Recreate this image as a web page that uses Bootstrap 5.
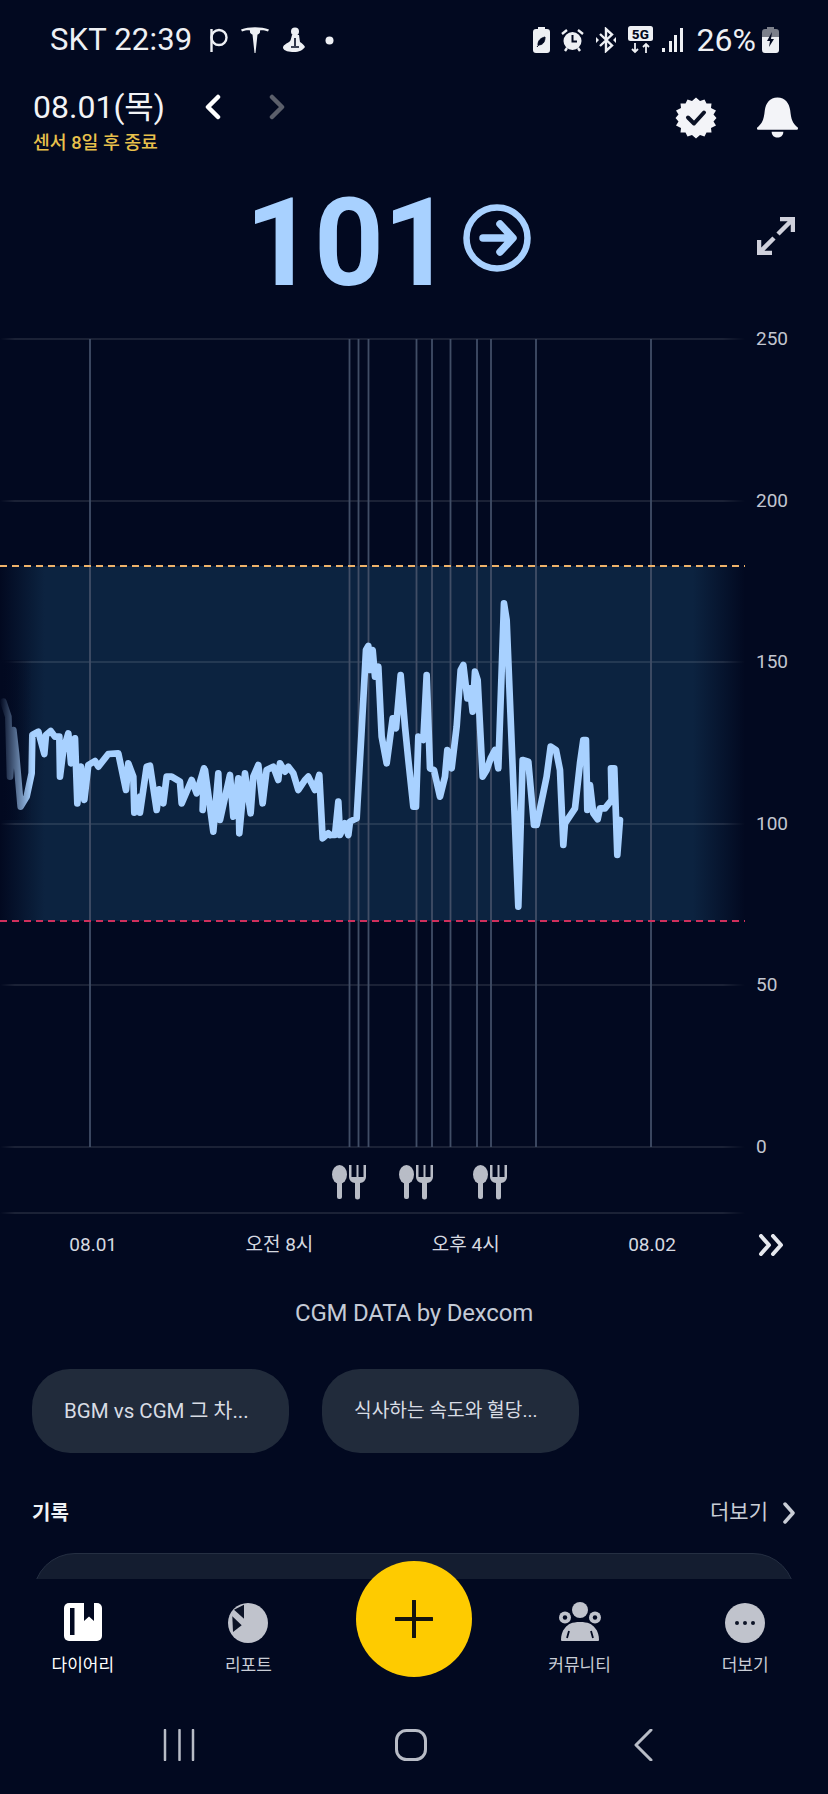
<!DOCTYPE html>
<html lang="ko">
<head>
<meta charset="utf-8">
<title>CGM</title>
<link href="https://cdn.jsdelivr.net/npm/bootstrap@5.3.0/dist/css/bootstrap.min.css" rel="stylesheet">
<style>
html,body{background:#020920;margin:0;}
body{font-family:Roboto,"Noto Sans CJK KR",sans-serif;color:#fff;}
.app-frame{width:828px;height:1794px;position:relative;overflow:hidden;background:#020920;}
.scroll-area{height:1579px;overflow:hidden;}
.status-row{height:80px;padding:0 49px 0 50px;font-size:31px;letter-spacing:.2px;color:#eef0f4;}
.status-time{margin-right:4px;}
.status-left{gap:13px;}
.status-right{gap:11px;}
.status-signal{margin-left:-2px;}
.status-pct{margin:0 -5px 0 2px;font-size:32px;letter-spacing:0;}
.status-dot{margin-left:7px;}
.head-row{height:85px;padding:10px 30px 0 33px;}
.date-text{font-size:32px;line-height:34px;color:#f2f3f6;width:166px;}
.sensor-text{font-size:18.3px;line-height:22px;color:#e9c14c;margin-top:8px;font-weight:500;}
.pager{height:34px;gap:44px;padding-left:4px;}
.head-icons{gap:40px;margin-top:7px;}
.value-row{height:157px;padding:0 33px 0 245px;}
.value-num{font-size:122px;line-height:1;font-weight:700;color:#a8d1ff;letter-spacing:-1px;margin-right:11px;}
.value-arrow{margin-bottom:12px;}
.value-expand{margin-bottom:16px;}
.chart-svg{display:block;}
.axis-lbl{font-family:Roboto,sans-serif;font-size:19px;fill:#c2c6d0;}
.axis-row{height:40px;position:relative;font-size:19px;color:#d6d9e0;}
.axis-cell{flex:0 0 186.3px;text-align:center;}
.axis-more{margin-right:44px;}
.credit{font-size:24px;line-height:32px;color:#c4cad6;margin-top:32px;letter-spacing:-.2px;}
.pill-row{gap:33px;padding:0 32px;margin-top:40px;}
.pill-item{width:257px;height:84px;border-radius:38px;background:#212b3b;color:#d8dce4;font-size:19.2px;padding-left:32px;}
.pill-latin{font-size:20.5px;}
.sec-row{padding:0 32px;margin-top:44px;height:32px;}
.sec-title{font-size:20px;font-weight:700;color:#f0f2f5;}
.sec-more{font-size:21px;color:#c9cdd6;gap:14px;}
.rec-card{margin:24px 33px 0;height:60px;background:#141d30;border:1px solid #252f42;border-radius:42px 42px 0 0;}
.tab-bar{height:108px;}
.tab-lbl{font-size:17px;line-height:20px;color:#c9cdd6;margin-top:11px;}
.tab-on{color:#fff;}
.tab-cell{padding-top:23px;}
.tab-ico{height:42px;}
.fab-btn{position:absolute;left:356px;top:1561px;width:116px;height:116px;border-radius:50%;background:#fecb00;}
.sys-bar{height:107px;padding-top:42px;}
</style>
</head>
<body>
<div class="app-frame d-flex flex-column">
<div class="scroll-area">
  <div class="status-row d-flex align-items-center justify-content-between">
    <div class="d-flex align-items-center status-left">
      <span class="status-time">SKT 22:39</span>
      <svg width="19" height="26" viewBox="0 0 19 26"><circle cx="10" cy="10.500" r="7.500" fill="none" stroke="#eef0f4" stroke-width="2.400"/><path d="M2.500 2V25" fill="none" stroke="#eef0f4" stroke-width="2.400"/></svg>
      <svg width="28" height="28" viewBox="0 0 28 28"><path d="M0 3.500C8 .5 20 .5 28 3.500L27 5.500C24 4.500 21 4 19 4.500L19 6.500C18 8 17 8.500 16.500 8.500L14.500 27h-1L11.500 8.500C11 8.500 10 8 9 6.500L9 4.500C7 4 4 4.500 1 5.500Z" fill="#eef0f4"/></svg>
      <svg width="23" height="26" viewBox="0 0 23 26"><circle cx="13" cy="4.500" r="4" fill="#eef0f4"/><path d="M10 8h7l1 7c2 1 4 3 5 5-2 3-6 5-11 5-5 0-10-1-11-4 0-3 3-4 6-6 2-1 2-4 3-7Z" fill="#eef0f4"/><path d="M13 11v8M9 20h8" stroke="#020920" stroke-width="1.600"/></svg>
      <svg width="9" height="9" class="status-dot"><circle cx="4.500" cy="4.500" r="4" fill="#eef0f4"/></svg>
    </div>
    <div class="d-flex align-items-center status-right">
      <svg width="17" height="26" viewBox="0 0 17 26"><path d="M5 0h7v2h2a3 3 0 0 1 3 3v18a3 3 0 0 1-3 3H3a3 3 0 0 1-3-3V5a3 3 0 0 1 3-3h2Z" fill="#eef0f4"/><path d="M5 18c0-5 3-7 7-8 0 5-2 8-7 8Zm-1 2 4-5" fill="#020920" stroke="#020920"/></svg>
      <svg width="23" height="26" viewBox="0 0 23 26"><circle cx="11.500" cy="14" r="9" fill="#eef0f4"/><path d="M11.500 8v6.500h4.500" fill="none" stroke="#020920" stroke-width="2"/><path d="M1 7l5-4M22 7l-5-4M4 24l2-3M19 24l-2-3" stroke="#eef0f4" stroke-width="2.400"/></svg>
      <svg width="22" height="26" viewBox="0 0 22 26"><path d="M11 13V2l6 5.500L5 19M11 13v11l6-5.500L5 7" fill="none" stroke="#eef0f4" stroke-width="2.400"/><path d="M1 10l3 3-3 3ZM21 10l-3 3 3 3Z" fill="#eef0f4"/></svg>
      <svg width="25" height="28" viewBox="0 0 25 28"><rect width="25" height="15" rx="2.500" fill="#eef0f4"/><text x="12.500" y="13" text-anchor="middle" font-size="13.500" font-weight="800" font-family="Roboto,sans-serif" fill="#020920">5G</text><path d="M7 17v9m-3-3 3 3 3-3M18 27v-9m-3 3 3-3 3 3" fill="none" stroke="#eef0f4" stroke-width="1.800"/></svg>
      <svg class="status-signal" width="22" height="26" viewBox="0 0 22 26"><path d="M0 21h3v4H0ZM7 14h3v11H7ZM12 8h3v17h-3ZM18 1h3v24h-3Z" fill="#eef0f4"/></svg>
      <span class="status-pct">26%</span>
      <svg width="17" height="26" viewBox="0 0 17 26"><path d="M5 0h7v2h2a3 3 0 0 1 3 3v5H0V5a3 3 0 0 1 3-3h2Z" fill="#7b7f8a"/><path d="M0 10h17v13a3 3 0 0 1-3 3H3a3 3 0 0 1-3-3Z" fill="#eef0f4"/><path d="M10 5 5 14h3l-1 6 5-8H9Z" fill="#020920"/></svg>
    </div>
  </div>

  <div class="head-row d-flex justify-content-between align-items-start">
    <div>
      <div class="d-flex align-items-center">
        <div class="date-text">08.01(목)</div>
        <div class="pager d-flex align-items-center">
          <svg width="20" height="26" viewBox="0 0 20 26"><path d="M15 3 5 13l10 10" fill="none" stroke="#fff" stroke-width="4.500" stroke-linecap="round" stroke-linejoin="round"/></svg>
          <svg width="20" height="26" viewBox="0 0 20 26"><path d="M5 3l10 10L5 23" fill="none" stroke="#5b5f6b" stroke-width="4.500" stroke-linecap="round" stroke-linejoin="round"/></svg>
        </div>
      </div>
      <div class="sensor-text">센서 8일 후 종료</div>
    </div>
    <div class="head-icons d-flex align-items-center">
      <svg width="42" height="42" viewBox="-21 -21 42 42"><path d="M0-20.500 4-17 8.500-18.500 10.500-14.500 15.500-14.500 15-10 20-7.500 17.500-3.500 20.500 0 17.500 3.500 20 7.500 15 10 15.500 14.500 10.500 14.500 8.500 18.500 4 17 0 20.500-4 17-8.500 18.500-10.500 14.500-15.500 14.500-15 10-20 7.500-17.500 3.500-20.500 0-17.500-3.500-20-7.500-15-10-15.500-14.500-10.500-14.500-8.500-18.500-4-17Z" fill="#f3f4f8"/><path d="M-8-.5-2 5.500 8-5.500" fill="none" stroke="#0b1226" stroke-width="4" stroke-linecap="round" stroke-linejoin="round"/></svg>
      <svg width="41" height="42" viewBox="0 0 42 42"><path d="M21 0c8 0 12 6 13 13 1 9 2 13 8 18 0 1 0 2-1 2H1c-1 0-1-1-1-2 6-5 7-9 8-18C9 6 13 0 21 0Z" fill="#f3f4f8"/><path d="M15 35h12c0 4-3 6-6 6s-6-2-6-6Z" fill="#f3f4f8"/></svg>
    </div>
  </div>

  <div class="value-row d-flex align-items-center">
    <span class="value-num">101</span>
    <svg class="value-arrow" width="68" height="68" viewBox="0 0 68 68"><circle cx="34" cy="34" r="30.500" fill="none" stroke="#a8d1ff" stroke-width="6.500"/><path d="M20 34h29M37 20l13 14-13 14" fill="none" stroke="#a8d1ff" stroke-width="7.500" stroke-linecap="round" stroke-linejoin="round"/></svg>
    <svg class="ms-auto value-expand" width="38" height="38" viewBox="0 0 38 38"><path d="M23 2h13v13M36 2 21 17M15 36H2V23M2 36l15-15" fill="none" stroke="#d0d1dc" stroke-width="4.500"/></svg>
  </div>

  <svg class="chart-svg" width="828" height="903" viewBox="0 322 828 903">
    <defs>
      <linearGradient id="bandFill" x1="0" x2="1" y1="0" y2="0">
        <stop offset="0" stop-color="#0c2340" stop-opacity="0"/>
        <stop offset=".06" stop-color="#0c2340"/>
        <stop offset=".93" stop-color="#0c2340"/>
        <stop offset="1" stop-color="#0c2340" stop-opacity="0"/>
      </linearGradient>
      <linearGradient id="edgeFade" x1="0" x2="1" y1="0" y2="0">
        <stop offset="0" stop-color="#020920"/>
        <stop offset=".4" stop-color="#020920" stop-opacity=".6"/>
        <stop offset="1" stop-color="#020920" stop-opacity="0"/>
      </linearGradient>
      <linearGradient id="hLine" x1="0" x2="1" y1="0" y2="0">
        <stop offset="0" stop-color="#fff" stop-opacity="0"/>
        <stop offset=".02" stop-color="#fff" stop-opacity=".1"/>
        <stop offset=".97" stop-color="#fff" stop-opacity=".1"/>
        <stop offset="1" stop-color="#fff" stop-opacity="0"/>
      </linearGradient>
    </defs>
    <rect x="0" y="566" width="745" height="355" fill="url(#bandFill)"/>
    <g fill="url(#hLine)">
      <rect x="0" y="338" width="745" height="2"/>
      <rect x="0" y="500" width="745" height="2"/>
      <rect x="0" y="661" width="745" height="2"/>
      <rect x="0" y="823" width="745" height="2"/>
      <rect x="0" y="984" width="745" height="2"/>
      <rect x="0" y="1146" width="745" height="2"/>
      <rect x="0" y="1212" width="745" height="2"/>
    </g>
    <g stroke="#414e66" stroke-width="1.800">
      <path d="M90 339V1147M349.500 339V1147M358.500 339V1147M368.500 339V1147M416.500 339V1147M432 339V1147M450.500 339V1147M477 339V1147M491 339V1147M536 339V1147M651 339V1147" fill="none"/>
    </g>
    <g stroke-width="2" stroke-dasharray="7 5" fill="none">
      <path d="M0 566H745" stroke="#eeb26a"/>
      <path d="M0 921H745" stroke="#cf2f5c"/>
    </g>
    <g fill="none" stroke="#a8d1ff" stroke-linejoin="round" stroke-linecap="round">
      <polyline transform="translate(0 600) scale(.3333)" stroke-width="20" points="10,305 25,350 30,530 40,390 48,460 62,620 80,590 95,520 97,405 115,395 133,462 138,405 152,393 165,410 178,410 180,530 190,450 205,400 213,490 225,415 232,610 243,500 253,600 265,495 285,483 295,500 325,462 355,460 378,570 385,490 400,530 403,638 420,590 420,638 440,500 450,497 470,630 478,568 490,610 500,530 515,530 540,545 545,610 575,540 590,580 612,505 608,630 615,510 640,695 655,520 660,660 690,525 700,650 715,535 718,700 735,520 752,640 760,530 775,495 788,610 800,510 820,500 835,540 840,490 855,515 865,500 880,520 895,570 915,540 925,530 945,570 958,525 968,715 985,700 990,705"/>
      <polyline transform="translate(330 580) scale(.3333)" stroke-width="20" points="0,765 15,765 25,665 30,765 45,730 55,765 60,725 80,715 95,450 108,210 115,198 120,270 128,210 135,290 145,260 155,470 170,550 188,415 198,445 212,285 225,440 235,540 250,680 258,680 265,470 280,480 290,285 300,565 312,570 330,650 345,590 352,510 365,565 380,440 392,270 400,255 412,355 420,325 428,395 435,275 443,300 458,590 470,570 482,535 495,510 505,565 522,70 530,120 565,980 578,540 595,545 612,735 620,735 650,590 662,500 678,510 690,570 700,795 705,730 735,685 750,550 760,480 768,480 772,690 780,615 790,700 803,718 810,685 825,685 845,660 843,565 853,565 862,825 870,720"/>
    </g>
    <rect x="0" y="660" width="32" height="160" fill="url(#edgeFade)"/>
    <g class="axis-lbl">
      <text x="756" y="345">250</text>
      <text x="756" y="507">200</text>
      <text x="756" y="668">150</text>
      <text x="756" y="830">100</text>
      <text x="756" y="991">50</text>
      <text x="756" y="1153">0</text>
    </g>
    <g fill="#b8bcc6">
      <g id="mealMark">
        <ellipse cx="339.500" cy="1174.500" rx="7.500" ry="9.500"/>
        <rect x="337" y="1175" width="5" height="24" rx="2"/>
        <path d="M349 1165h2.500v12h5v-12h2v12h5v-12h2.500v12a6 6 0 0 1-6 6v14a2 2 0 0 1-5 0v-14a6 6 0 0 1-6-6Z"/>
      </g>
      <use href="#mealMark" x="67"/>
      <use href="#mealMark" x="141"/>
    </g>
  </svg>

  <div class="axis-row d-flex align-items-center">
    <span class="axis-cell">08.01</span>
    <span class="axis-cell">오전 8시</span>
    <span class="axis-cell">오후 4시</span>
    <span class="axis-cell">08.02</span>
    <svg class="ms-auto axis-more" width="26" height="22" viewBox="0 0 26 22"><path d="M3 2l8 9-8 9M15 2l8 9-8 9" fill="none" stroke="#e6e8ee" stroke-width="4" stroke-linecap="round" stroke-linejoin="round"/></svg>
  </div>

  <div class="credit text-center">CGM DATA by Dexcom</div>

  <div class="pill-row d-flex">
    <div class="pill-item pill-latin d-flex align-items-center">BGM vs CGM 그 차...</div>
    <div class="pill-item d-flex align-items-center">식사하는 속도와 혈당...</div>
  </div>

  <div class="sec-row d-flex justify-content-between align-items-center">
    <span class="sec-title">기록</span>
    <span class="sec-more d-flex align-items-center">더보기
      <svg width="14" height="22" viewBox="0 0 14 22"><path d="M3 2l8 9-8 9" fill="none" stroke="#c9cdd6" stroke-width="3.500" stroke-linecap="round" stroke-linejoin="round"/></svg>
    </span>
  </div>

  <div class="rec-card"></div>
</div>

<div class="tab-bar row g-0">
  <div class="col tab-cell text-center">
    <div class="tab-ico"><svg width="38" height="40" viewBox="0 0 38 40"><rect width="38" height="38" y="1" rx="5" fill="#fff"/><rect x="6" y="6" width="4.500" height="27" fill="#020920"/><path d="M20 1h10v18l-5-4.500-5 4.500Z" fill="#020920"/></svg></div>
    <div class="tab-lbl tab-on">다이어리</div>
  </div>
  <div class="col tab-cell text-center">
    <div class="tab-ico"><svg width="42" height="42" viewBox="-21 -21 42 42"><circle r="20" fill="#c0c3cc"/><path d="M-14-13.300-4-18.300-4-4.300Z" fill="#0c1326"/><path d="M-15.700-6.700-6.300 2.300-15 9Z" fill="#0c1326"/></svg></div>
    <div class="tab-lbl">리포트</div>
  </div>
  <div class="col"></div>
  <div class="col tab-cell text-center">
    <div class="tab-ico"><svg width="42" height="42" viewBox="0 0 42 42"><circle cx="21" cy="8" r="8" fill="#c0c3cc"/><circle cx="6" cy="15.500" r="6" fill="#c0c3cc"/><circle cx="36" cy="15.500" r="6" fill="#c0c3cc"/><circle cx="6" cy="15.500" r="2.200" fill="#020920"/><circle cx="36" cy="15.500" r="2.200" fill="#020920"/><path d="M2 38c0-4 1-9 4-12 3-4 7-6 15-6s12 2 15 6c3 3 4 8 4 12 0 1-1 1-2 1H4c-1 0-2 0-2-1Z" fill="#c0c3cc"/><path d="M8 36l2-7M34 36l-2-7" stroke="#020920" stroke-width="1.800"/></svg></div>
    <div class="tab-lbl">커뮤니티</div>
  </div>
  <div class="col tab-cell text-center">
    <div class="tab-ico"><svg width="42" height="42" viewBox="-21 -21 42 42"><circle r="20" fill="#c0c3cc"/><circle cx="-8" r="2" fill="#0c1326"/><circle r="2" fill="#0c1326"/><circle cx="8" r="2" fill="#0c1326"/></svg></div>
    <div class="tab-lbl">더보기</div>
  </div>
</div>

<div class="sys-bar">
  <svg class="d-block" width="828" height="32" viewBox="0 0 828 32"><g fill="none" stroke="#b8bcc6" stroke-width="2.500"><path d="M165 1V31M179.500 1V31M193 1V31" stroke-linecap="round"/><rect x="396.500" y="1.500" width="29" height="29" rx="10" stroke-width="3"/><path d="M651 1 636 16l15 15" stroke-width="3" stroke-linecap="round" stroke-linejoin="round"/></g></svg>
</div>

<div class="fab-btn d-flex align-items-center justify-content-center">
  <svg width="38" height="38" viewBox="0 0 38 38"><path d="M19 1V37M1 19H37" stroke="#14140f" stroke-width="4" stroke-linecap="round"/></svg>
</div>
</div>
<script src="https://cdn.jsdelivr.net/npm/bootstrap@5.3.0/dist/js/bootstrap.bundle.min.js"></script>
</body>
</html>
